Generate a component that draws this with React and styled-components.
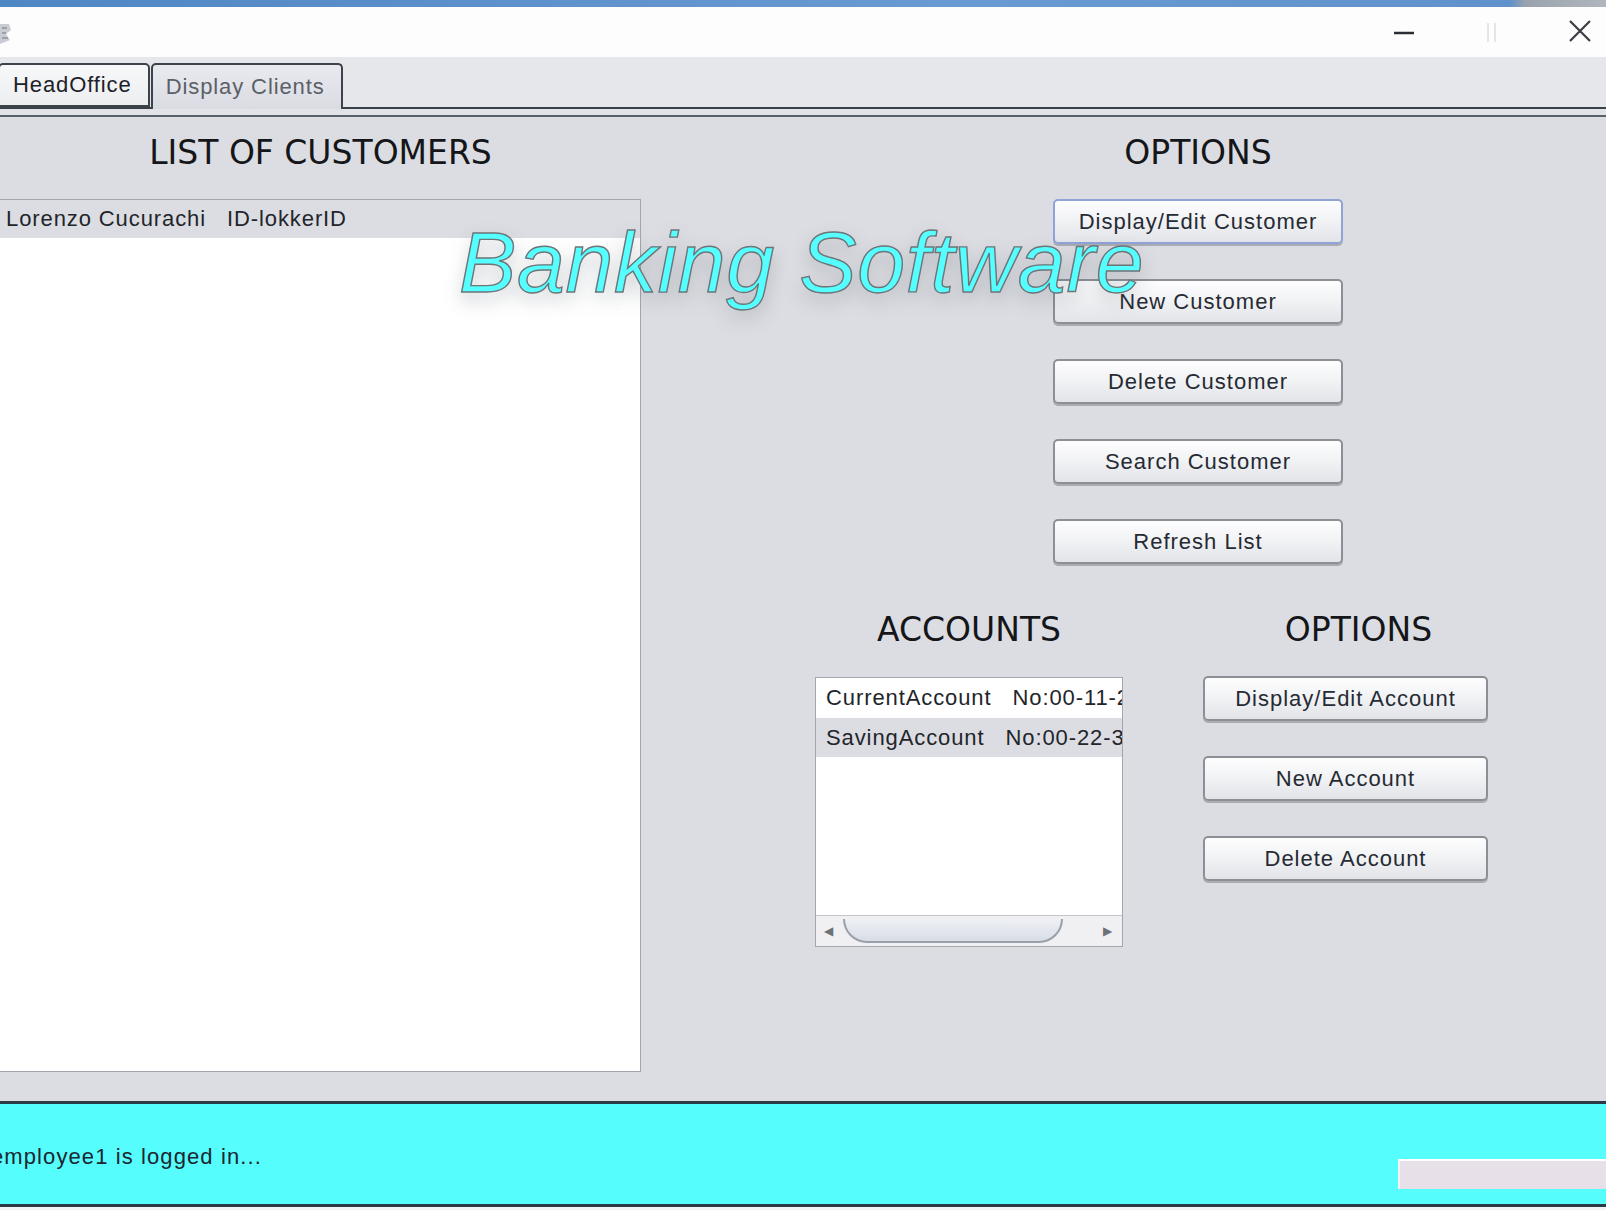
import React from "react";
import styled, { createGlobalStyle } from "styled-components";

const GlobalStyle = createGlobalStyle`
  html, body {
    margin: 0;
    padding: 0;
    background: #f4f4f6;
    font-family: "Liberation Sans", Arial, sans-serif;
  }
`;

const Window = styled.div`
  width: 1606px;
  height: 1210px;
  overflow: hidden;
  position: relative;
  display: flex;
  flex-direction: column;
  background: #f4f4f6;
`;

const TopStrip = styled.div`
  height: 7px;
  background: linear-gradient(90deg, #4f86c4 0%, #6a9bd2 60%, #5f92cb 94%, #9aa3ad 95%, #b0b6bd 100%);
`;

const TitleBar = styled.div`
  height: 50px;
  background: #fdfdfe;
  display: flex;
  align-items: center;
  justify-content: space-between;
`;

const AppIcon = styled.svg`
  width: 14px;
  height: 28px;
  margin-top: 4px;
`;

const WindowControls = styled.div`
  display: flex;
  align-items: center;
  gap: 60px;
  padding-right: 12px;
`;

const ControlIcon = styled.svg`
  width: 28px;
  height: 28px;
  display: block;
`;

const TabStrip = styled.div`
  height: 50px;
  background: #e6e7eb;
  display: flex;
  align-items: flex-end;
  border-bottom: 2px solid #3a4148;
`;

const Tab = styled.div`
  height: ${(p) => (p.$active ? "46px" : "44px")};
  margin-bottom: ${(p) => (p.$active ? "-2px" : "0")};
  padding: 0 16px 0 13px;
  box-sizing: border-box;
  display: flex;
  align-items: center;
  font-size: 22px;
  letter-spacing: 0.9px;
  color: ${(p) => (p.$active ? "#5b5f66" : "#1e2228")};
  background: ${(p) =>
    p.$active
      ? "linear-gradient(#e9eaf0, #dadce3)"
      : "linear-gradient(#f7f8fa, #eceef0)"};
  border: 2px solid #3d434b;
  border-bottom: ${(p) => (p.$active ? "none" : "2px solid #3d434b")};
  border-radius: 5px 5px 0 0;
  margin-left: ${(p) => (p.$first ? "-2px" : "1px")};
`;

const TabGap = styled.div`
  height: 6px;
  background: #e2e3e8;
  border-bottom: 2px solid #59606a;
`;

const Content = styled.div`
  height: 984px;
  background: #dcdde2;
  display: flex;
`;

const LeftPanel = styled.div`
  width: 641px;
  display: flex;
  flex-direction: column;
  padding-top: 12px;
`;

const Heading = styled.div`
  height: 40px;
  line-height: 40px;
  margin-top: 4px;
  margin-bottom: -4px;
  padding-left: ${(p) => p.$shift || "0"};
  text-align: center;
  font-family: "DejaVu Sans", sans-serif;
  font-size: 33px;
  color: #141619;
  white-space: nowrap;
`;

const ListBox = styled.div`
  margin-top: ${(p) => p.$top || "0"};
  height: ${(p) => p.$height};
  background: #ffffff;
  border: 1px solid #a3a6ac;
  border-left: ${(p) => (p.$flush ? "none" : "1px solid #a3a6ac")};
  box-sizing: border-box;
  display: flex;
  flex-direction: column;
  overflow: hidden;
`;

const ListRow = styled.div`
  height: ${(p) => p.$h || "38px"};
  flex-shrink: 0;
  display: flex;
  align-items: center;
  padding-left: ${(p) => p.$pad || "6px"};
  font-size: 22px;
  letter-spacing: 0.9px;
  color: #22252a;
  background: ${(p) => (p.$selected ? "#dcdde2" : "#ffffff")};
  white-space: pre;
  overflow: hidden;
`;

const ListFill = styled.div`
  flex: 1;
`;

const RightPanel = styled.div`
  flex: 1;
  display: flex;
  flex-direction: column;
  padding-top: 12px;
`;

const CustomerOptions = styled.div`
  width: 290px;
  margin-left: 412px;
  display: flex;
  flex-direction: column;
`;

const ButtonStack = styled.div`
  margin-top: 30px;
  display: flex;
  flex-direction: column;
  gap: 35px;
`;

const Button = styled.button`
  height: 45px;
  width: 100%;
  font-family: "Liberation Sans", Arial, sans-serif;
  font-size: 22px;
  letter-spacing: 1px;
  color: #262a33;
  background: linear-gradient(#fdfdfe 0%, #f2f3f5 45%, #e3e4e8 100%);
  border: 2px solid ${(p) => (p.$focused ? "#8fa3d8" : "#8c8f95")};
  border-radius: 5px;
  box-shadow: 0 2px 0 #a9acb2;
  padding: 0;
  white-space: nowrap;
`;

const AccountsRow = styled.div`
  margin-top: 42px;
  display: flex;
  padding-left: 174px;
`;

const AccountsColumn = styled.div`
  width: 308px;
  display: flex;
  flex-direction: column;
`;

const AccountOptions = styled.div`
  width: 285px;
  margin-left: 80px;
  display: flex;
  flex-direction: column;
`;

const ScrollBar = styled.div`
  height: 30px;
  flex-shrink: 0;
  border-top: 1px solid #c4c6cb;
  background: #f0f0f2;
  display: flex;
  align-items: center;
  padding: 0 10px 0 8px;
  gap: 10px;
`;

const Arrow = styled.span`
  font-size: 12px;
  color: #6d7178;
`;

const Thumb = styled.div`
  flex: 1;
  height: 22px;
  margin-right: 30px;
  border: 2px solid #9aa0aa;
  border-top: none;
  border-radius: 0 0 26px 26px;
  background: linear-gradient(#eef0f4, #d8dde6);
`;

const StatusBar = styled.div`
  height: 100px;
  background: #55fdfd;
  border-top: 3px solid #2b3a44;
  border-bottom: 3px solid #2b3a44;
  display: flex;
  align-items: center;
  justify-content: space-between;
`;

const StatusText = styled.div`
  font-size: 22px;
  letter-spacing: 1.1px;
  color: #1c2530;
  margin-left: -9px;
  margin-top: 6px;
  white-space: nowrap;
`;

const ProgressBar = styled.div`
  width: 206px;
  height: 28px;
  margin-top: 40px;
  background: #e7e0e8;
  border-top: 2px solid #ffffff;
  border-left: 2px solid #f4f0f4;
`;

const Banner = styled.div`
  position: absolute;
  left: 459px;
  top: 212px;
  font-family: "Liberation Sans", Arial, sans-serif;
  font-style: italic;
  font-size: 86px;
  line-height: 100px;
  color: #55ffff;
  -webkit-text-stroke: 1.4px #6e7478;
  text-shadow: 0 8px 18px rgba(90, 100, 110, 0.35);
  white-space: nowrap;
  letter-spacing: 0.7px;
`;

const customerButtons = [
  "Display/Edit Customer",
  "New Customer",
  "Delete Customer",
  "Search Customer",
  "Refresh List",
];

const accountButtons = ["Display/Edit Account", "New Account", "Delete Account"];

export default function App() {
  return (
    <>
      <GlobalStyle />
      <Window>
        <TopStrip />
        <TitleBar>
          <AppIcon viewBox="0 0 14 28">
            <path d="M0 4 L9 4 L11 10 L6 14 L10 20 L0 24 Z" fill="#c9ccd2" />
            <path d="M2 8 L7 8 M2 13 L6 13 M2 18 L8 18" stroke="#8d9199" strokeWidth="1.5" />
          </AppIcon>
          <WindowControls>
            <ControlIcon viewBox="0 0 28 28">
              <path d="M4 15 H24" stroke="#2a2d33" strokeWidth="2.5" />
            </ControlIcon>
            <ControlIcon viewBox="0 0 28 28">
              <path d="M10 5 V24 M17 5 V24" stroke="#e4e6ea" strokeWidth="2" />
            </ControlIcon>
            <ControlIcon viewBox="0 0 28 28">
              <path d="M4 3 L24 23 M24 3 L4 23" stroke="#3a3d42" strokeWidth="2.2" />
            </ControlIcon>
          </WindowControls>
        </TitleBar>
        <TabStrip>
          <Tab $first>HeadOffice</Tab>
          <Tab $active>Display Clients</Tab>
        </TabStrip>
        <TabGap />
        <Content>
          <LeftPanel>
            <Heading>LIST OF CUSTOMERS</Heading>
            <ListBox $top="30px" $height="873px" $flush>
              <ListRow $selected>{"Lorenzo Cucurachi   ID-lokkerID"}</ListRow>
              <ListFill />
            </ListBox>
          </LeftPanel>
          <RightPanel>
            <CustomerOptions>
              <Heading>OPTIONS</Heading>
              <ButtonStack>
                {customerButtons.map((label, i) => (
                  <Button key={label} $focused={i === 0}>
                    {label}
                  </Button>
                ))}
              </ButtonStack>
            </CustomerOptions>
            <AccountsRow>
              <AccountsColumn>
                <Heading>ACCOUNTS</Heading>
                <ListBox $top="31px" $height="270px">
                  <ListRow $h="40px" $pad="10px">
                    {"CurrentAccount   No:00-11-22"}
                  </ListRow>
                  <ListRow $h="39px" $pad="10px" $selected>
                    {"SavingAccount   No:00-22-33"}
                  </ListRow>
                  <ListFill />
                  <ScrollBar>
                    <Arrow>◀</Arrow>
                    <Thumb />
                    <Arrow>▶</Arrow>
                  </ScrollBar>
                </ListBox>
              </AccountsColumn>
              <AccountOptions>
                <Heading $shift="26px">OPTIONS</Heading>
                <ButtonStack>
                  {accountButtons.map((label) => (
                    <Button key={label}>{label}</Button>
                  ))}
                </ButtonStack>
              </AccountOptions>
            </AccountsRow>
          </RightPanel>
        </Content>
        <StatusBar>
          <StatusText>employee1 is logged in...</StatusText>
          <ProgressBar />
        </StatusBar>
        <Banner>Banking Software</Banner>
      </Window>
    </>
  );
}
